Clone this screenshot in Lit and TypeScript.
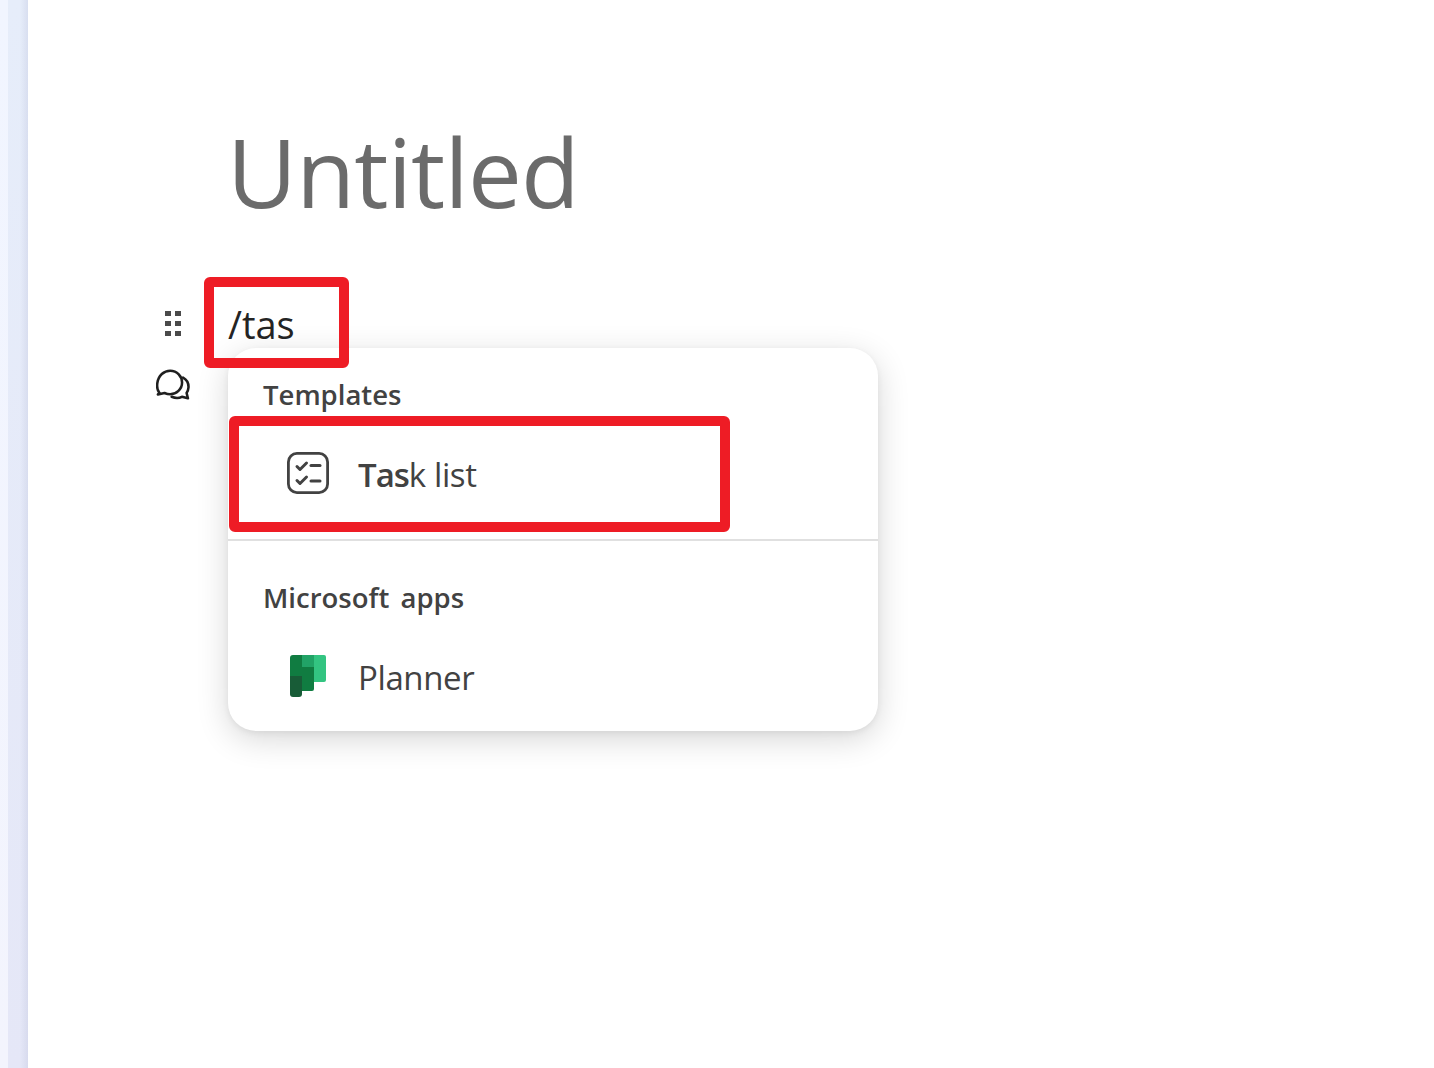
import { css, html, LitElement } from "lit";
import { customElement } from "lit/decorators.js";

@customElement("app-root")
export class AppRoot extends LitElement {
  static styles = css`
    :host {
      display: flex;
      height: 1068px;
      overflow: hidden;
      background: #fff;
      font-family: "Open Sans", "Noto Sans", sans-serif;
    }
    .rail {
      width: 8px;
      flex: none;
      background: linear-gradient(#f1f5ff, #f3f4fd);
    }
    .rail-edge {
      width: 20px;
      flex: none;
      background: linear-gradient(90deg, transparent 60%, rgba(190, 195, 220, 0.35) 100%),
        linear-gradient(#e6edfa, #e5e7f7);
    }
    .page {
      flex: 1;
      padding: 119px 0 0 126px;
    }
    .title {
      margin: 0 0 0 73px;
      font-size: 96px;
      font-weight: 400;
      line-height: 104px;
      letter-spacing: -0.8px;
      color: #6b6b6b;
    }
    .block {
      position: relative;
      display: flex;
      margin-top: 77px;
    }
    .gutter {
      width: 74px;
      flex: none;
      display: flex;
      flex-direction: column;
      align-items: center;
    }
    .gutter svg {
      display: block;
    }
    .grip {
      margin: 11px 0 0 -36px;
    }
    .chat {
      margin: 32px 0 0 -36px;
    }
    .input {
      font-size: 38px;
      line-height: 48px;
      color: #242424;
    }
    .mark {
      position: absolute;
      box-sizing: border-box;
      border: 10px solid #ee1c25;
      border-radius: 6px;
      z-index: 2;
    }
    .input-mark {
      left: 50px;
      top: -23px;
      width: 145px;
      height: 91px;
    }
    .item-mark {
      left: 75px;
      top: 116px;
      width: 501px;
      height: 116px;
    }
    .menu {
      position: absolute;
      left: 74px;
      top: 48px;
      width: 650px;
      height: 383px;
      border-radius: 28px;
      background: #fff;
      box-shadow: 0 8px 32px rgba(0, 0, 0, 0.16), 0 2px 6px rgba(0, 0, 0, 0.06);
      z-index: 1;
      color: #424242;
    }
    .group {
      padding-top: 28px;
      height: 191px;
      box-sizing: border-box;
    }
    .group + .group {
      border-top: 2px solid #e0e0e0;
      height: 192px;
      padding-top: 38px;
    }
    .heading {
      padding-left: 35px;
      font-size: 27.5px;
      font-weight: 600;
      line-height: 38px;
      word-spacing: 4px;
    }
    .item {
      display: flex;
      align-items: center;
      height: 62px;
      margin-top: 29px;
      padding-left: 59px;
      gap: 29px;
      font-size: 33px;
      letter-spacing: -0.4px;
    }
    .icon {
      flex: none;
      width: 42px;
      display: flex;
      justify-content: center;
      margin-top: -2px;
    }
    .icon svg {
      display: block;
    }
    .hit {
      font-weight: 600;
      letter-spacing: -1px;
    }
  `;

  render() {
    return html`
      <div class="rail"></div>
      <div class="rail-edge"></div>
      <main class="page">
        <h1 class="title">Untitled</h1>
        <div class="block">
          <div class="gutter">
            <svg class="grip" width="18" height="26" viewBox="0 0 18 26" fill="#4a4a4a">
              <rect x="1" y="0" width="6" height="5" />
              <rect x="11" y="0" width="6" height="5" />
              <rect x="1" y="10" width="6" height="5" />
              <rect x="11" y="10" width="6" height="5" />
              <rect x="1" y="20" width="6" height="5" />
              <rect x="11" y="20" width="6" height="5" />
            </svg>
            <svg class="chat" width="34" height="31" viewBox="0 0 36 32" fill="none" stroke="#1f1f1f" stroke-width="2.7" stroke-linejoin="round" stroke-linecap="round">
              <path d="M3.5 24.6 C0.8 21.8 1 17.8 1.4 14.6 C2.4 6.4 8.6 1.4 15 1.4 C22.4 1.4 27.6 7.4 27.6 14 C27.6 21 21.6 26.4 15 26.4 C12.6 26.4 10.8 25.8 9 25 L2 26.6 Z" />
              <path d="M28.6 8.6 C32.6 10.8 34.6 15 34.4 19 C34.2 21.6 33.4 23.6 32.4 25 L33.8 30.6 L27.4 29 C24.4 30.6 20.4 30.6 16.6 29" />
            </svg>
          </div>
          <div class="input">/tas</div>
          <div class="mark input-mark"></div>
          <div class="menu">
            <section class="group">
              <div class="heading">Templates</div>
              <div class="item">
                <span class="icon">
                  <svg width="42" height="42" viewBox="0 0 42 42" fill="none" stroke="#424242" stroke-width="2.8" stroke-linecap="round" stroke-linejoin="round">
                    <rect x="1.4" y="1.4" width="39.2" height="39.2" rx="8.5" />
                    <path d="M10 14.5l3 3 6.5-6.5" stroke-width="3" />
                    <path d="M24 13.5h9" stroke-width="3" />
                    <path d="M10 28.5l3 3 6.5-6.5" stroke-width="3" />
                    <path d="M24 29h9" stroke-width="3" />
                  </svg>
                </span>
                <span><span class="hit">Tas</span>k list</span>
              </div>
            </section>
            <section class="group">
              <div class="heading">Microsoft apps</div>
              <div class="item">
                <span class="icon">
                  <svg width="36" height="42" viewBox="0 0 36 42">
                    <path d="M24 0h10a2 2 0 0 1 2 2v23a2 2 0 0 1-2 2H24z" fill="#33c481" />
                    <path d="M12 0h12v12H12z" fill="#21a366" />
                    <path d="M3 0h9v12h12v22a2 2 0 0 1-2 2H12V21H0V3a3 3 0 0 1 3-3z" fill="#107c41" />
                    <path d="M0 21h12v18a3 3 0 0 1-3 3H3a3 3 0 0 1-3-3z" fill="#185c37" />
                  </svg>
                </span>
                <span>Planner</span>
              </div>
            </section>
          </div>
          <div class="mark item-mark"></div>
        </div>
      </main>
    `;
  }
}
